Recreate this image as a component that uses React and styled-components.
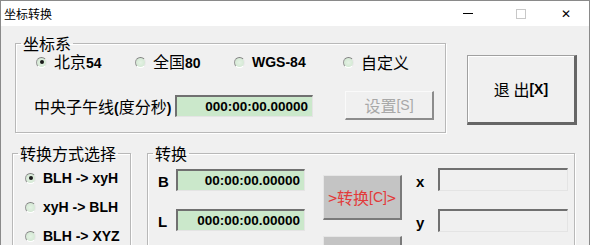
import styled, { createGlobalStyle } from "styled-components";

const Global = createGlobalStyle`
  html, body { margin: 0; padding: 0; background: #f0f0f0; }
  body { font-family: "Noto Sans CJK SC", "Liberation Sans", sans-serif; }
`;

export default function App() {
  return (
    <>
      <Global />
      <Window>
        <TitleBar>
          <Title>坐标转换</Title>
          <Controls>
            <MinIcon />
            <MaxIcon />
            <CloseIcon>✕</CloseIcon>
          </Controls>
        </TitleBar>
        <Body>
          <TopRow>
            <SystemGroup>
              <Legend>坐标系</Legend>
              <RadioRow>
                <RadioItem $w={99}>
                  <Radio $on />
                  <span>北京<Latin>54</Latin></span>
                </RadioItem>
                <RadioItem $w={99}>
                  <Radio />
                  <span>全国<Latin>80</Latin></span>
                </RadioItem>
                <RadioItem $w={109}>
                  <Radio />
                  <Latin>WGS-84</Latin>
                </RadioItem>
                <RadioItem>
                  <Radio />
                  <span>自定义</span>
                </RadioItem>
              </RadioRow>
              <MeridianRow>
                <MeridianLabel>
                  中央子午线<Latin>(</Latin>度分秒<Latin>)</Latin>
                </MeridianLabel>
                <Field $w={138} $h={22} $green>000:00:00.00000</Field>
                <SetButton disabled>
                  设置<Latin>[S]</Latin>
                </SetButton>
              </MeridianRow>
            </SystemGroup>
            <ExitButton>
              退 出<Latin>[X]</Latin>
            </ExitButton>
          </TopRow>
          <BottomRow>
            <ModeGroup>
              <Legend>转换方式选择</Legend>
              <ModeList>
                <RadioItem>
                  <Radio $on />
                  <Latin>BLH -&gt; xyH</Latin>
                </RadioItem>
                <RadioItem>
                  <Radio />
                  <Latin>xyH -&gt; BLH</Latin>
                </RadioItem>
                <RadioItem>
                  <Radio />
                  <Latin>BLH -&gt; XYZ</Latin>
                </RadioItem>
              </ModeList>
            </ModeGroup>
            <ConvertGroup>
              <Legend>转换</Legend>
              <Columns>
                <FieldColumn $top={1}>
                  <FieldRow>
                    <AxisLabel $w={18}>B</AxisLabel>
                    <Field $w={129} $h={22} $green>00:00:00.00000</Field>
                  </FieldRow>
                  <FieldRow>
                    <AxisLabel $w={18}>L</AxisLabel>
                    <Field $w={129} $h={22} $green>000:00:00.00000</Field>
                  </FieldRow>
                </FieldColumn>
                <ButtonColumn>
                  <ConvertButton $color="#e23a3a">&gt;转换<Latin $thin>[C]</Latin>&gt;</ConvertButton>
                  <ConvertButton $color="#35b54a">&lt;转换<Latin $thin>[R]</Latin>&lt;</ConvertButton>
                </ButtonColumn>
                <FieldColumn $top={0}>
                  <FieldRow>
                    <AxisLabel $w={22}>x</AxisLabel>
                    <Field $w={130} $h={23} />
                  </FieldRow>
                  <FieldRow>
                    <AxisLabel $w={22}>y</AxisLabel>
                    <Field $w={130} $h={23} />
                  </FieldRow>
                </FieldColumn>
              </Columns>
            </ConvertGroup>
          </BottomRow>
        </Body>
      </Window>
    </>
  );
}

const Window = styled.div`
  box-sizing: border-box;
  width: 590px;
  height: 245px;
  overflow: hidden;
  border: 1px solid #8a8a8a;
  border-bottom: none;
  background: #f0f0f0;
  color: #000;
`;

const TitleBar = styled.div`
  height: 25px;
  background: #fff;
  display: flex;
  align-items: center;
  justify-content: space-between;
  padding-left: 3px;
`;

const Title = styled.div`
  font-size: 12px;
  line-height: 14px;
`;

const Controls = styled.div`
  display: flex;
  align-items: center;
  height: 100%;
`;

const MinIcon = styled.span`
  width: 10px;
  height: 1px;
  background: #000;
  margin-right: 43px;
`;

const MaxIcon = styled.span`
  box-sizing: border-box;
  width: 10px;
  height: 10px;
  border: 1px solid #c8c8c8;
  margin-right: 35px;
`;

const CloseIcon = styled.span`
  font-family: "DejaVu Sans", sans-serif;
  font-size: 12px;
  line-height: 12px;
  margin-right: 18px;
`;

const Body = styled.div`
  padding: 8px 0 0 11px;
`;

const TopRow = styled.div`
  display: flex;
  align-items: flex-start;
`;

const Group = styled.fieldset`
  margin: 0;
  padding: 0;
  border: 1px solid #b8b8b8;
  box-shadow: inset 1px 1px 0 #fff, 1px 1px 0 #fff;
  min-width: 0;
`;

const Legend = styled.legend`
  margin-left: 5px;
  padding: 0 2px;
  font-size: 16px;
  line-height: 18px;
`;

const SystemGroup = styled(Group)`
  width: 429px;
  height: 91px;
  margin-left: 3px;
  box-sizing: content-box;
  height: auto;
  padding-bottom: 12px;
`;

const RadioRow = styled.div`
  display: flex;
  align-items: center;
  height: 20px;
  padding-left: 20px;
`;

const RadioItem = styled.label`
  display: flex;
  align-items: center;
  gap: 7px;
  width: ${(p) => (p.$w ? `${p.$w}px` : "auto")};
  font-size: 16px;
  line-height: 20px;
  white-space: nowrap;
`;

const Radio = styled.span`
  position: relative;
  box-sizing: border-box;
  width: 11px;
  height: 11px;
  flex: none;
  border-radius: 50%;
  border: 1px solid;
  border-color: #808080 #e8e8e8 #ffffff #9a9a9a;
  background: radial-gradient(circle at 50% 50%, #e4f2e4 0, #cfe5cf 100%);
  &::after {
    content: "";
    display: ${(p) => (p.$on ? "block" : "none")};
    position: absolute;
    left: 2.5px;
    top: 2.5px;
    width: 4px;
    height: 4px;
    border-radius: 50%;
    background: #1a1a1a;
  }
`;

const Latin = styled.span`
  font-family: "Liberation Sans", Arial, sans-serif;
  font-weight: ${(p) => (p.$thin ? 400 : 700)};
  font-size: 14px;
`;

const MeridianRow = styled.div`
  display: flex;
  align-items: center;
  margin-top: 19px;
  padding-left: 18px;
  height: 29px;
`;

const MeridianLabel = styled.span`
  width: 141px;
  font-size: 16px;
  white-space: nowrap;
`;

const Field = styled.div`
  box-sizing: border-box;
  width: ${(p) => p.$w}px;
  height: ${(p) => p.$h}px;
  flex: none;
  background: ${(p) => (p.$green ? "#cbe8cb" : "#f0f0f0")};
  border-style: solid;
  border-width: 2px 1px 1px 2px;
  border-color: #707070 #e4e4e4 #e4e4e4 #707070;
  font-family: "Liberation Sans", Arial, sans-serif;
  font-weight: 700;
  font-size: 13.5px;
  line-height: 19px;
  text-align: right;
  padding-right: 4px;
  white-space: nowrap;
`;

const RaisedButton = styled.button`
  box-sizing: border-box;
  margin: 0;
  padding: 0;
  border-style: solid;
  border-width: 1px 2px 2px 1px;
  border-color: #e8e8e8 #6a6a6a #6a6a6a #e8e8e8;
  font-family: "Noto Sans CJK SC", "Liberation Sans", sans-serif;
  font-size: 16px;
  line-height: 18px;
  display: flex;
  align-items: center;
  justify-content: center;
`;

const SetButton = styled(RaisedButton)`
  width: 89px;
  height: 29px;
  margin-left: 32px;
  background: #f0f0f0;
  color: #a8a8a8;
  border-color: #fafafa #8c8c8c #8c8c8c #fafafa;
  & span { font-weight: 400; }
`;

const ExitButton = styled(RaisedButton)`
  width: 110px;
  height: 70px;
  margin: 21px 0 0 21px;
  background: #f0f0f0;
  color: #000;
  border-width: 1px 3px 3px 1px;
  border-color: #a0a0a0 #666 #666 #a0a0a0;
  box-shadow: inset 1px 1px 0 #fff;
`;

const BottomRow = styled.div`
  display: flex;
  align-items: flex-start;
  margin-top: 11px;
  gap: 16px;
`;

const ModeGroup = styled(Group)`
  width: 117px;
  height: 120px;
`;

const ModeList = styled.div`
  display: flex;
  flex-direction: column;
  gap: 9px;
  padding: 6px 0 0 12px;
`;

const ConvertGroup = styled(Group)`
  width: 426px;
  height: 120px;
`;

const Columns = styled.div`
  display: flex;
  align-items: flex-start;
  padding: 6px 0 0 10px;
`;

const FieldColumn = styled.div`
  display: flex;
  flex-direction: column;
  gap: 18px;
  margin-top: ${(p) => p.$top}px;
`;

const FieldRow = styled.div`
  display: flex;
  align-items: center;
`;

const AxisLabel = styled.span`
  width: ${(p) => p.$w}px;
  font-family: "Liberation Sans", Arial, sans-serif;
  font-weight: 700;
  font-size: 15px;
  padding-top: 3px;
`;

const ButtonColumn = styled.div`
  display: flex;
  flex-direction: column;
  gap: 16px;
  margin: 7px 14px 0 18px;
`;

const ConvertButton = styled(RaisedButton)`
  width: 79px;
  height: 45px;
  background: #c4c4c4;
  color: ${(p) => p.$color};
  border-color: #e6e6e6 #7a7a7a #7a7a7a #e6e6e6;
`;
